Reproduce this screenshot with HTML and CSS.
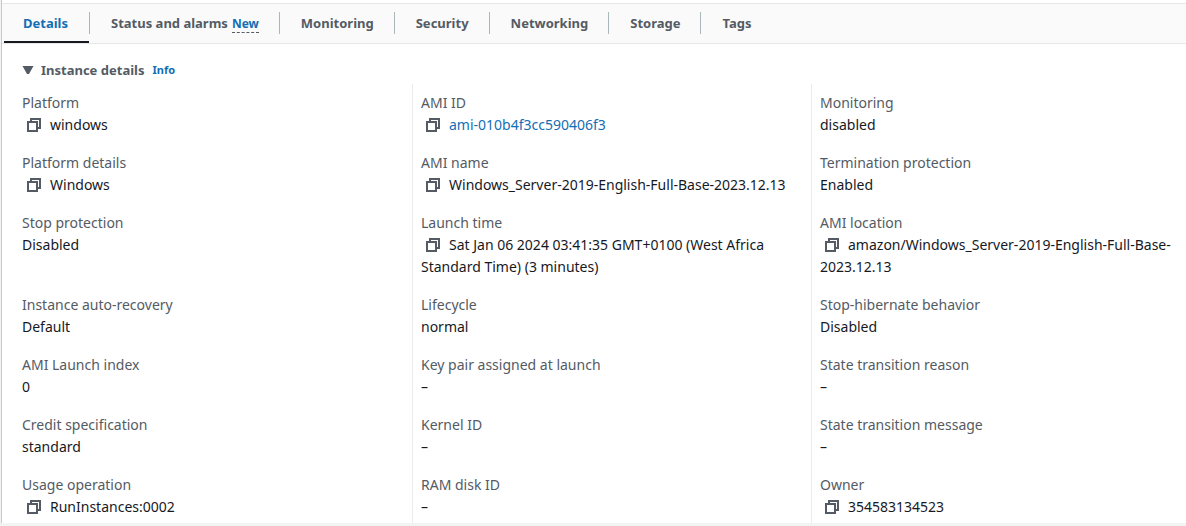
FILE: index.html
```
<!DOCTYPE html>
<html lang="en">
<head>
<meta charset="utf-8">
<title>Instance details</title>
<link rel="stylesheet" href="styles.css">
</head>
<body>
<svg class="sprite" aria-hidden="true">
  <symbol id="copy" viewBox="0 0 14 14">
    <path d="M4 4V1h9v9h-3M1 4h9v9H1z" fill="none" stroke="currentColor" stroke-width="2"/>
  </symbol>
</svg>
<main class="panel">
  <nav class="tabs" role="tablist">
    <div class="tab"><button class="tab-button active" role="tab" aria-selected="true">Details</button></div>
    <div class="tab"><button class="tab-button" role="tab">Status and alarms</button><button class="new">New</button></div>
    <div class="tab"><button class="tab-button" role="tab">Monitoring</button></div>
    <div class="tab"><button class="tab-button" role="tab">Security</button></div>
    <div class="tab"><button class="tab-button" role="tab">Networking</button></div>
    <div class="tab"><button class="tab-button" role="tab">Storage</button></div>
    <div class="tab"><button class="tab-button" role="tab">Tags</button></div>
  </nav>
  <section class="content">
    <header class="heading">
      <button class="toggle" aria-expanded="true"><svg class="caret" viewBox="0 0 12 8" aria-hidden="true"><path d="M0 0h11L6.500 8h-2z" fill="currentColor"/></svg>Instance details</button>
      <a class="info" href="#">Info</a>
    </header>
    <dl class="grid">
      <div class="cell"><dt>Platform</dt><dd><button class="copy" aria-label="Copy"><svg viewBox="0 0 14 14"><use href="#copy"/></svg></button>windows</dd></div>
      <div class="cell"><dt>AMI ID</dt><dd><button class="copy" aria-label="Copy"><svg viewBox="0 0 14 14"><use href="#copy"/></svg></button><a class="link" href="#">ami-010b4f3cc590406f3</a></dd></div>
      <div class="cell"><dt>Monitoring</dt><dd>disabled</dd></div>

      <div class="cell"><dt>Platform details</dt><dd><button class="copy" aria-label="Copy"><svg viewBox="0 0 14 14"><use href="#copy"/></svg></button>Windows</dd></div>
      <div class="cell"><dt>AMI name</dt><dd><button class="copy" aria-label="Copy"><svg viewBox="0 0 14 14"><use href="#copy"/></svg></button>Windows_Server-2019-English-Full-Base-2023.12.13</dd></div>
      <div class="cell"><dt>Termination protection</dt><dd>Enabled</dd></div>

      <div class="cell"><dt>Stop protection</dt><dd>Disabled</dd></div>
      <div class="cell"><dt>Launch time</dt><dd><button class="copy" aria-label="Copy"><svg viewBox="0 0 14 14"><use href="#copy"/></svg></button>Sat Jan 06 2024 03:41:35 GMT+0100 (West Africa Standard Time) (3 minutes)</dd></div>
      <div class="cell"><dt>AMI location</dt><dd><button class="copy" aria-label="Copy"><svg viewBox="0 0 14 14"><use href="#copy"/></svg></button>amazon/Windows_Server-2019-English-Full-Base-2023.12.13</dd></div>

      <div class="cell"><dt>Instance auto-recovery</dt><dd>Default</dd></div>
      <div class="cell"><dt>Lifecycle</dt><dd>normal</dd></div>
      <div class="cell"><dt>Stop-hibernate behavior</dt><dd>Disabled</dd></div>

      <div class="cell"><dt>AMI Launch index</dt><dd>0</dd></div>
      <div class="cell"><dt>Key pair assigned at launch</dt><dd>–</dd></div>
      <div class="cell"><dt>State transition reason</dt><dd>–</dd></div>

      <div class="cell"><dt>Credit specification</dt><dd>standard</dd></div>
      <div class="cell"><dt>Kernel ID</dt><dd>–</dd></div>
      <div class="cell"><dt>State transition message</dt><dd>–</dd></div>

      <div class="cell"><dt>Usage operation</dt><dd><button class="copy" aria-label="Copy"><svg viewBox="0 0 14 14"><use href="#copy"/></svg></button>RunInstances:0002</dd></div>
      <div class="cell"><dt>RAM disk ID</dt><dd>–</dd></div>
      <div class="cell"><dt>Owner</dt><dd><button class="copy" aria-label="Copy"><svg viewBox="0 0 14 14"><use href="#copy"/></svg></button>354583134523</dd></div>
    </dl>
  </section>
</main>
</body>
</html>
```
FILE: styles.css
```
* { box-sizing: border-box; }
body {
  margin: 0;
  background: #f2f3f3;
  color: #16191f;
  font: 13px/22px "Noto Sans", "Open Sans", sans-serif;
}
button {
  padding: 0;
  border: 0;
  background: none;
  color: inherit;
  font: inherit;
  cursor: pointer;
}
a { text-decoration: none; }
.sprite { display: none; }
.panel {
  margin-left: 1px;
  padding-top: 3px;
  background: #fff;
  border-left: 1px solid #c6c9cb;
}
.tabs {
  display: flex;
  height: 41px;
  padding-left: 2px;
  background: #fafafa;
  border-top: 1px solid #e6e8e8;
  border-bottom: 1px solid #e6e8e8;
}
.tab {
  display: flex;
  align-items: center;
  gap: 4px;
  padding: 0 20px 2px 0;
  color: #545b64;
  font-weight: 700;
}
.tab + .tab::before {
  content: "";
  height: 22px;
  margin-right: 17px;
  border-left: 1px solid #aab7b8;
}
.tab:first-child { padding: 0; }
.tab-button.active {
  height: 39px;
  padding: 0 21px 0 19px;
  color: #146eb4;
  border-bottom: 2px solid #16191f;
}
.new {
  padding-top: 4px;
  color: #146eb4;
  font-size: 12px;
  line-height: 16px;
  border-bottom: 1px dashed #545b64;
}
.content { padding: 15px 0 0 11px; }
.heading {
  display: flex;
  align-items: center;
  gap: 8px;
  padding: 0 9px 3px;
}
.toggle {
  display: flex;
  align-items: center;
  gap: 6px;
  color: #545b64;
  font-weight: 700;
}
.caret { width: 13px; height: 8px; }
.info { color: #146eb4; font-size: 11px; font-weight: 700; }
.grid {
  display: grid;
  grid-template-columns: 399fr 399fr 375fr;
  margin: 0;
  font-size: 14px;
}
.cell { padding: 0 8px 16px; border-left: 1px solid #eaeded; }
.cell:nth-child(3n + 1) { border-left-color: transparent; }
.cell:nth-child(-n + 3) { padding-top: 8px; }
.cell:nth-last-child(-n + 3) { padding-bottom: 5px; }
dt { color: #545b64; }
dd { margin: 0; }
.copy { margin: 0 9px 0 5px; color: #545b64; line-height: 14px; vertical-align: -2px; }
.copy svg { display: block; width: 14px; height: 14px; }
.link { color: #146eb4; }
```
